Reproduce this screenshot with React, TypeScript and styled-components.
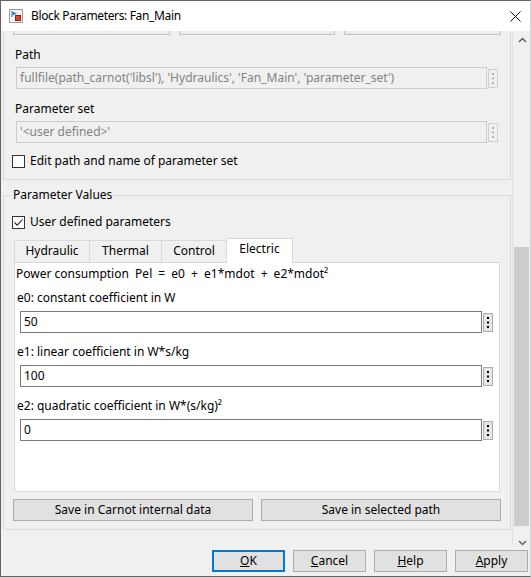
import styled, { createGlobalStyle } from "styled-components";

const GlobalStyle = createGlobalStyle`
  html, body {
    margin: 0;
    padding: 0;
    background: #f0f0f0;
  }
  body {
    font-family: "Noto Sans", "Liberation Sans", sans-serif;
    font-size: 12px;
    line-height: 16px;
    color: #000;
  }
`;

const Window = styled.div`
  box-sizing: border-box;
  width: 531px;
  height: 577px;
  display: flex;
  flex-direction: column;
  background: #f0f0f0;
  border: 1px solid #646464;
  border-right-color: #d6d6d6;
  overflow: hidden;
`;

const TitleBar = styled.div`
  flex: none;
  height: 30px;
  display: flex;
  align-items: center;
  padding-left: 8px;
  background: #fff;
`;

const TitleText = styled.span`
  margin-left: 8px;
  font-size: 12px;
  letter-spacing: -0.35px;
`;

const CloseButton = styled.div`
  margin-left: auto;
  margin-right: 9px;
  width: 11px;
  height: 11px;
  display: flex;
`;

const Body = styled.div`
  flex: none;
  height: 516px;
  display: flex;
`;

const ScrollArea = styled.div`
  flex: 1;
  overflow: hidden;
  padding: 0 1px 0 2px;
`;

const Scrollbar = styled.div`
  flex: none;
  width: 16px;
  display: flex;
  flex-direction: column;
  border-left: 1px solid #e2e2e2;
  padding-left: 1px;
`;

const ArrowBox = styled.div<{ $down?: boolean }>`
  flex: none;
  height: ${(p) => (p.$down ? "17px" : "18px")};
  display: flex;
  justify-content: center;
  align-items: ${(p) => (p.$down ? "flex-end" : "center")};
  padding-bottom: ${(p) => (p.$down ? "1px" : "0")};
  box-sizing: border-box;
`;

const Track = styled.div`
  flex: 1;
  display: flex;
  flex-direction: column;
`;

const Thumb = styled.div`
  margin-top: 198px;
  width: 15px;
  height: 279px;
  background: #cdcdcd;
`;

const Group = styled.div`
  box-sizing: border-box;
  width: 508px;
  border: 1px solid #dcdcdc;
  border-top: none;
  padding: 0 9px 10px 8px;
`;

const ClippedRow = styled.div`
  height: 4px;
  overflow: hidden;
  display: flex;
  align-items: flex-end;
  gap: 9px;
  margin-left: 1px;
`;

const ClippedButton = styled.div`
  flex: 1;
  flex-shrink: 0;
  height: 22px;
  box-sizing: border-box;
  border: 1px solid #c4c4c4;
  background: #ececec;
`;

const FieldLabel = styled.div<{ $indent: number; $gap: number }>`
  margin-left: ${(p) => p.$indent}px;
  margin-top: ${(p) => p.$gap}px;
  white-space: pre;
`;

const Formula = styled.span`
  word-spacing: 3px;
`;

const FieldRow = styled.div<{ $left: number; $right: number; $gap: number }>`
  display: flex;
  align-items: center;
  gap: 1px;
  margin: ${(p) => p.$gap}px ${(p) => p.$right}px 0 ${(p) => p.$left}px;
`;

const TextBox = styled.div<{ $disabled?: boolean }>`
  flex: 1;
  height: 22px;
  box-sizing: border-box;
  display: flex;
  align-items: center;
  padding-left: 3px;
  white-space: nowrap;
  overflow: hidden;
  border: 1px solid ${(p) => (p.$disabled ? "#cccccc" : "#7a7a7a")};
  background: ${(p) => (p.$disabled ? "#f0f0f0" : "#fff")};
  color: ${(p) => (p.$disabled ? "#838383" : "#000")};
`;

const DotsButton = styled.div<{ $disabled?: boolean }>`
  flex: none;
  width: 10px;
  height: 19px;
  box-sizing: border-box;
  border: 1px solid ${(p) => (p.$disabled ? "#d0d0d0" : "#adadad")};
  background: ${(p) => (p.$disabled ? "#f0f0f0" : "#e6e6e6")};
  display: flex;
  justify-content: center;
`;

const CheckRow = styled.label<{ $gap: number }>`
  display: flex;
  align-items: center;
  gap: 5px;
  margin-top: ${(p) => p.$gap}px;
  height: 16px;
`;

const CheckBox = styled.span`
  width: 13px;
  height: 13px;
  box-sizing: border-box;
  border: 1px solid #333;
  background: #fff;
  display: flex;
  align-items: center;
  justify-content: center;
`;

const ValuesSet = styled.fieldset`
  box-sizing: border-box;
  width: 508px;
  margin: 7px 0 0;
  border: 1px solid #dcdcdc;
  padding: 11px 9px 8px 8px;
  min-width: 0;
`;

const Legend = styled.legend`
  padding: 0 1px;
  line-height: 16px;
`;

const TabStrip = styled.div`
  display: flex;
  align-items: flex-end;
  height: 24px;
  margin: 8px 0 0 2px;
  position: relative;
  z-index: 1;
`;

const Tab = styled.div<{ $width: number; $active?: boolean }>`
  box-sizing: border-box;
  width: ${(p) => p.$width}px;
  height: ${(p) => (p.$active ? "25px" : "22px")};
  margin-left: -1px;
  margin-bottom: ${(p) => (p.$active ? "-1px" : "0")};
  border: 1px solid #d9d9d9;
  border-bottom: none;
  background: ${(p) => (p.$active ? "#fff" : "#f0f0f0")};
  text-align: center;
  line-height: ${(p) => (p.$active ? "19px" : "20px")};
  &:first-child {
    margin-left: 0;
  }
`;

const TabPanel = styled.div`
  box-sizing: border-box;
  height: 230px;
  margin: 0 1px 0 2px;
  border: 1px solid #d9d9d9;
  background: #fff;
  padding-top: 3px;
`;

const ButtonRow = styled.div`
  display: flex;
  gap: 8px;
  margin: 7px 0 0 1px;
`;

const PushButton = styled.div`
  flex: 1;
  height: 22px;
  box-sizing: border-box;
  border: 1px solid #adadad;
  background: #e1e1e1;
  display: flex;
  align-items: center;
  justify-content: center;
`;

const Footer = styled.div`
  flex: 1;
  display: flex;
  justify-content: flex-end;
  align-items: flex-start;
  gap: 8px;
  padding: 3px 2px 0 0;
`;

const DialogButton = styled.div<{ $default?: boolean }>`
  width: 73px;
  height: 22px;
  box-sizing: border-box;
  border: ${(p) => (p.$default ? "2px solid #0078d7" : "1px solid #adadad")};
  background: #e1e1e1;
  display: flex;
  align-items: center;
  justify-content: center;
`;

function AppIcon() {
  return (
    <svg width="14" height="14" viewBox="0 0 14 14">
      <rect x="0.5" y="0.5" width="13" height="13" fill="#f4f4f4" stroke="#9a9a9a" />
      <path d="M3 2 V8" stroke="#1e6fc8" strokeWidth="1" />
      <path d="M3.5 2.5 L8 4.5 L3.5 6.5 Z" fill="#2b86e0" />
      <rect x="6.5" y="6.5" width="5" height="5" fill="#e2441c" stroke="#7a2a10" />
    </svg>
  );
}

function CloseIcon() {
  return (
    <svg width="11" height="11" viewBox="0 0 11 11">
      <path d="M0.5 0.5 L10.5 10.5 M10.5 0.5 L0.5 10.5" stroke="#111" strokeWidth="1" />
    </svg>
  );
}

function Caret({ down }: { down?: boolean }) {
  return (
    <svg width="9" height="6" viewBox="0 0 9 6">
      <path
        d={down ? "M1 1 L4.5 4.5 L8 1" : "M1 5 L4.5 1.5 L8 5"}
        fill="none"
        stroke="#606060"
        strokeWidth="1.5"
      />
    </svg>
  );
}

function Dots({ disabled }: { disabled?: boolean }) {
  const c = disabled ? "#b0b0b0" : "#000";
  return (
    <svg width="2" height="17" viewBox="0 0 2 17">
      <rect x="0" y="3" width="2" height="2" fill={c} />
      <rect x="0" y="7.5" width="2" height="2" fill={c} />
      <rect x="0" y="12" width="2" height="2" fill={c} />
    </svg>
  );
}

function Check() {
  return (
    <svg width="11" height="11" viewBox="0 0 11 11">
      <path d="M1.5 5.5 L4.2 8.2 L9.5 2.5" fill="none" stroke="#222" strokeWidth="1.1" />
    </svg>
  );
}

const tabs = [
  { name: "Hydraulic", width: 76 },
  { name: "Thermal", width: 73 },
  { name: "Control", width: 66 },
  { name: "Electric", width: 67, active: true },
];

const coefficients = [
  { label: "e0: constant coefficient in W", value: "50" },
  { label: "e1: linear coefficient in W*s/kg", value: "100" },
  { label: "e2: quadratic coefficient in W*(s/kg)²", value: "0" },
];

export default function App() {
  return (
    <>
      <GlobalStyle />
      <Window>
        <TitleBar>
          <AppIcon />
          <TitleText>Block Parameters: Fan_Main</TitleText>
          <CloseButton>
            <CloseIcon />
          </CloseButton>
        </TitleBar>

        <Body>
          <ScrollArea>
            <Group>
              <ClippedRow>
                <ClippedButton />
                <ClippedButton />
                <ClippedButton />
              </ClippedRow>

              <FieldLabel $indent={3} $gap={12}>Path</FieldLabel>
              <FieldRow $left={4} $right={3} $gap={4}>
                <TextBox $disabled>
                  fullfile(path_carnot('libsl'), 'Hydraulics', 'Fan_Main', 'parameter_set')
                </TextBox>
                <DotsButton $disabled>
                  <Dots disabled />
                </DotsButton>
              </FieldRow>

              <FieldLabel $indent={3} $gap={12}>Parameter set</FieldLabel>
              <FieldRow $left={4} $right={3} $gap={4}>
                <TextBox $disabled>'&lt;user defined&gt;'</TextBox>
                <DotsButton $disabled>
                  <Dots disabled />
                </DotsButton>
              </FieldRow>

              <CheckRow $gap={10}>
                <CheckBox />
                Edit path and name of parameter set
              </CheckRow>
            </Group>

            <ValuesSet>
              <Legend>Parameter Values</Legend>
              <CheckRow $gap={0}>
                <CheckBox>
                  <Check />
                </CheckBox>
                User defined parameters
              </CheckRow>

              <TabStrip>
                {tabs.map((t) => (
                  <Tab key={t.name} $width={t.width} $active={t.active}>
                    {t.name}
                  </Tab>
                ))}
              </TabStrip>
              <TabPanel>
                <FieldLabel $indent={1} $gap={0}>
                  {"Power consumption  "}
                  <Formula>Pel = e0 + e1*mdot + e2*mdot²</Formula>
                </FieldLabel>
                {coefficients.map((c, i) => (
                  <div key={c.label}>
                    <FieldLabel $indent={2} $gap={i === 0 ? 8 : 11}>
                      {c.label}
                    </FieldLabel>
                    <FieldRow $left={5} $right={6} $gap={5}>
                      <TextBox>{c.value}</TextBox>
                      <DotsButton>
                        <Dots />
                      </DotsButton>
                    </FieldRow>
                  </div>
                ))}
              </TabPanel>

              <ButtonRow>
                <PushButton>Save in Carnot internal data</PushButton>
                <PushButton>Save in selected path</PushButton>
              </ButtonRow>
            </ValuesSet>
          </ScrollArea>

          <Scrollbar>
            <ArrowBox>
              <Caret />
            </ArrowBox>
            <Track>
              <Thumb />
            </Track>
            <ArrowBox $down>
              <Caret down />
            </ArrowBox>
          </Scrollbar>
        </Body>

        <Footer>
          <DialogButton $default>
            <span>
              <u>O</u>K
            </span>
          </DialogButton>
          <DialogButton>
            <span>
              <u>C</u>ancel
            </span>
          </DialogButton>
          <DialogButton>
            <span>
              <u>H</u>elp
            </span>
          </DialogButton>
          <DialogButton>
            <span>
              <u>A</u>pply
            </span>
          </DialogButton>
        </Footer>
      </Window>
    </>
  );
}
